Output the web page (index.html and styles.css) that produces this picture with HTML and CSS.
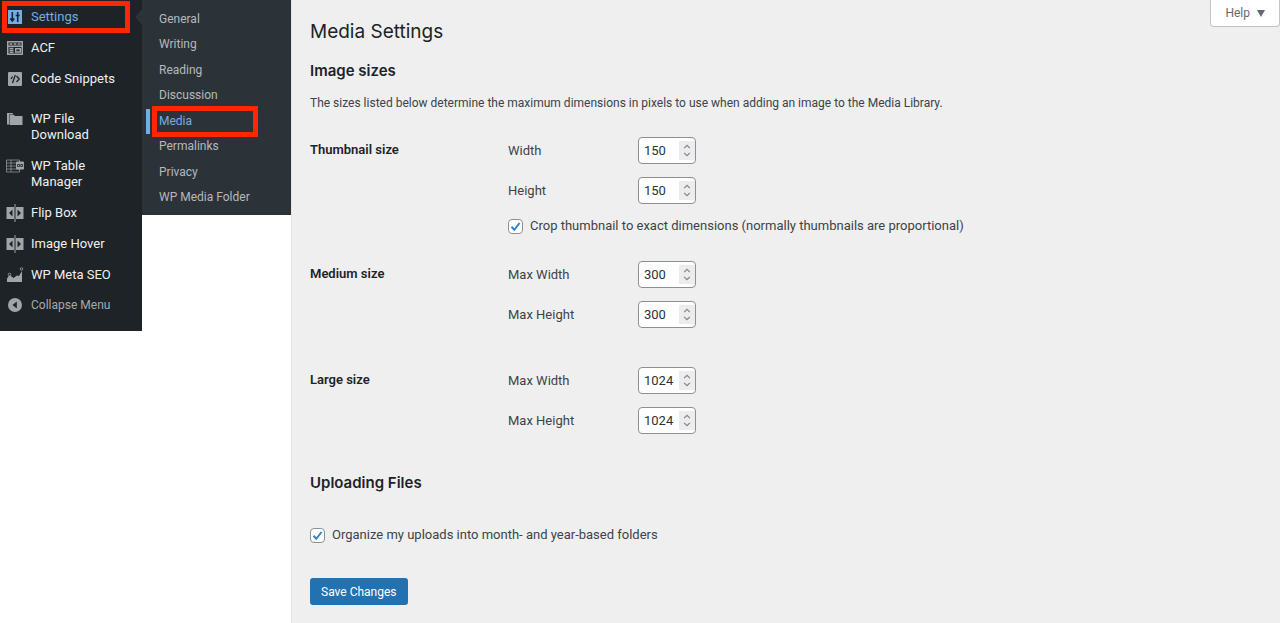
FILE: index.html
```
<!DOCTYPE html>
<html lang="en">
<head>
<meta charset="utf-8">
<title>Media Settings</title>
<link rel="stylesheet" href="styles.css">
</head>
<body>
<svg class="defs" aria-hidden="true">
  <symbol id="flip" viewBox="0 0 18 18"><path fill="currentColor" d="M.5 3H8v12H.5zM10 3h7.500v12H10zM8.500 0h1v18h-1z"/><path fill="#1d2327" d="M6.500 5.500v7L3 9zM11.500 5.500v7L15 9z"/></symbol>
  <symbol id="spin" viewBox="0 0 16 20"><path d="M5 7.500 8 4.500l3 3M5 12.500l3 3 3-3" fill="none" stroke="#85858b" stroke-width="1.300"/></symbol>
  <symbol id="tick" viewBox="0 0 15 15"><path d="M3.500 7.800 6.300 10.800 11.600 4" fill="none" stroke="#3582c4" stroke-width="2"/></symbol>
</svg>
<div class="layout">
  <nav class="admin-menu" aria-label="Main menu">
    <ul class="menu">
      <li><a class="item current" href="#"><svg class="icon" viewBox="0 0 18 18"><path fill="#72aee6" d="M2 2h14v14H2z"/><path d="M6.300 4v9M4.300 10.500l2 2.500 2-2.500M11.700 14V5M9.700 7.500h4M11.700 4v3" fill="none" stroke="#1d2327" stroke-width="1.600"/></svg>Settings</a></li>
      <li><a class="item" href="#"><svg class="icon" viewBox="0 0 18 18"><path fill="currentColor" fill-rule="evenodd" d="M1 2h16v14H1zM2.500 3.500v3h13v-3zM2.500 8v6.500h13V8z"/><path d="M3.500 5h2.800M7.600 5h2.800M11.700 5h2.800M3.500 9.500h4M3.500 11.500h4M3.500 13.300h4" stroke="currentColor" stroke-width="1.300"/><path d="M9.700 9.800h4.600v3.200H9.700z" fill="none" stroke="currentColor" stroke-width="1.400"/></svg>ACF</a></li>
      <li><a class="item" href="#"><svg class="icon" viewBox="0 0 18 18"><rect x="2" y="2" width="14" height="14" rx="1" fill="currentColor"/><path d="M9.300 5 6.500 13M10.500 6 13.200 9l-2.700 3M6.500 6.500 5 9" fill="none" stroke="#1d2327" stroke-width="1.300"/></svg>Code Snippets</a></li>
      <li class="group"><a class="item" href="#"><svg class="icon" viewBox="0 0 18 18"><path fill="currentColor" d="M1 3h5.500l1 1.500H3v10H1zM3.500 5H8l1 1h7.500v9h-13z"/></svg>WP File Download</a></li>
      <li><a class="item" href="#"><svg class="icon" viewBox="0 0 18 18"><path d="M.5 3h13v12H.5zM.5 6h13M.5 9h13M.5 12h13M5 3v12" fill="none" stroke="currentColor" stroke-width=".7"/><rect x="10" y="4.500" width="8" height="8" rx="1" fill="currentColor"/><path d="M11.500 7.500h2v2h-2zM14.700 7.500h2v2h-2z" fill="none" stroke="#1d2327" stroke-width=".8"/></svg>WP Table Manager</a></li>
      <li><a class="item" href="#"><svg class="icon"><use href="#flip"/></svg>Flip Box</a></li>
      <li><a class="item" href="#"><svg class="icon"><use href="#flip"/></svg>Image Hover</a></li>
      <li><a class="item" href="#"><svg class="icon" viewBox="0 0 18 18"><path fill="currentColor" d="M1 16v-3.500L3.500 9 7.500 12 11 9.500l2 .5 3-5v11z"/><circle cx="3.500" cy="8.500" r="1.300" fill="#1d2327" stroke="currentColor" stroke-width=".8"/><circle cx="15.500" cy="3" r="1.300" fill="#1d2327" stroke="currentColor" stroke-width=".8"/></svg>WP Meta SEO</a></li>
    </ul>
    <button class="item collapse" type="button"><svg class="icon" viewBox="0 0 18 18"><circle cx="9" cy="9" r="7" fill="currentColor"/><path fill="#1d2327" d="M10.800 5.500v7L6.500 9z"/></svg>Collapse Menu</button>
    <span class="mark mark-settings"></span>
    <span class="arrow"></span>
  </nav>
  <nav class="submenu" aria-label="Settings">
    <a href="#">General</a>
    <a href="#">Writing</a>
    <a href="#">Reading</a>
    <a href="#">Discussion</a>
    <a class="active" href="#" aria-current="page">Media<span class="mark mark-media"></span></a>
    <a href="#">Permalinks</a>
    <a href="#">Privacy</a>
    <a href="#">WP Media Folder</a>
  </nav>
  <main class="content">
    <button class="help" type="button">Help <svg viewBox="0 0 8 7" width="8" height="7"><path d="M0 0h8L4 7z" fill="#646970"/></svg></button>
    <h1>Media Settings</h1>
    <form>
      <h2>Image sizes</h2>
      <p class="intro">The sizes listed below determine the maximum dimensions in pixels to use when adding an image to the Media Library.</p>
      <section class="size-row">
        <h3>Thumbnail size</h3>
        <div class="fields">
          <label for="tw">Width</label>
          <span class="number"><input id="tw" type="number" value="150"><svg><use href="#spin"/></svg></span>
          <label for="th">Height</label>
          <span class="number"><input id="th" type="number" value="150"><svg><use href="#spin"/></svg></span>
          <label class="check"><span class="box"><input type="checkbox" checked><svg><use href="#tick"/></svg></span>Crop thumbnail to exact dimensions (normally thumbnails are proportional)</label>
        </div>
      </section>
      <section class="size-row medium">
        <h3>Medium size</h3>
        <div class="fields">
          <label for="mw">Max Width</label>
          <span class="number"><input id="mw" type="number" value="300"><svg><use href="#spin"/></svg></span>
          <label for="mh">Max Height</label>
          <span class="number"><input id="mh" type="number" value="300"><svg><use href="#spin"/></svg></span>
        </div>
      </section>
      <section class="size-row large">
        <h3>Large size</h3>
        <div class="fields">
          <label for="lw">Max Width</label>
          <span class="number"><input id="lw" type="number" value="1024"><svg><use href="#spin"/></svg></span>
          <label for="lh">Max Height</label>
          <span class="number"><input id="lh" type="number" value="1024"><svg><use href="#spin"/></svg></span>
        </div>
      </section>
      <h2 class="uploads">Uploading Files</h2>
      <label class="check organize"><span class="box"><input type="checkbox" checked><svg><use href="#tick"/></svg></span>Organize my uploads into month- and year-based folders</label>
      <button class="save" type="submit">Save Changes</button>
    </form>
  </main>
</div>
</body>
</html>
```
FILE: styles.css
```
* { box-sizing: border-box; }
body {
  margin: 0;
  background: #fff;
  color: #3c434a;
  font: 13px/16px Roboto, "Liberation Sans", sans-serif;
}
h1, h2, h3, p, ul { margin: 0; padding: 0; }
button, input { font: inherit; }
a { text-decoration: none; }
.defs { position: absolute; width: 0; height: 0; }
.layout {
  display: grid;
  grid-template-columns: 142px 149px 1fr;
  align-items: start;
  min-height: 100vh;
}

.admin-menu {
  position: relative;
  padding: 1px 0 11px;
  background: #1d2327;
}
.menu { list-style: none; }
.group { margin-top: 9px; }
.item {
  display: flex;
  gap: 7px;
  padding: 8px 16px 7px 6px;
  color: #f0f0f1;
}
.icon {
  flex: none;
  width: 18px;
  height: 18px;
  margin: -1px 0;
  color: #a0a5aa;
}
.current { color: #72aee6; }
.collapse {
  width: 100%;
  padding-top: 7px;
  padding-right: 0;
  border: 0;
  background: none;
  color: #a7aaad;
  font-size: 12px;
  text-align: left;
}
.arrow {
  position: absolute;
  top: 9px;
  right: 0;
  border: 8px solid transparent;
  border-left: 0;
  border-right: 7px solid #2c3338;
}
.mark {
  position: absolute;
  border: 5px solid #ff2600;
}
.mark-settings { inset: 1px 12px auto 2px; height: 32px; }

.submenu {
  display: flex;
  flex-direction: column;
  justify-content: space-between;
  min-height: 215px;
  padding: 7px 0 5px;
  background: #2c3338;
}
.submenu a {
  position: relative;
  padding: 4px 0 5px 17px;
  color: #b4b9be;
  font-size: 12px;
}
.submenu .active { color: #72aee6; }
.submenu .active::before {
  content: "";
  position: absolute;
  inset: 0 auto 0 4px;
  width: 4px;
  background: #72aee6;
}
.mark-media { inset: -3px 33px -3px 10px; }

.content {
  position: relative;
  align-self: stretch;
  padding: 19px 18px 18px;
  border-left: 1px solid #e4e4e5;
  background: #efefef;
}
.help {
  position: absolute;
  top: 0;
  right: 0;
  display: flex;
  align-items: center;
  gap: 7px;
  padding: 5px 14px;
  border: 1px solid #c3c4c7;
  border-top: 0;
  border-radius: 0 0 4px 4px;
  background: #fff;
  color: #646970;
  font-size: 12px;
}
h1, h2 { font-family: Inter, "Liberation Sans", sans-serif; }
h1, h2, h3 { color: #1d2327; }
h1 {
  font-size: 19px;
  font-weight: 400;
  line-height: 26px;
}
h2, h3 { font-weight: 600; }
h2 { margin-top: 16px; font-size: 15px; line-height: 20px; }
h3 { padding-top: 5px; font-size: 13px; }
.intro { margin-top: 14px; font-size: 12px; }
.size-row {
  display: grid;
  grid-template-columns: 198px 1fr;
  margin-top: 26px;
}
.medium { margin-top: 27px; }
.large { margin-top: 39px; }
.fields {
  display: grid;
  grid-template-columns: 130px 58px 1fr;
  align-items: center;
  row-gap: 13px;
}
.fields > label { grid-column: 1; }
.number { position: relative; display: flex; }
.number input {
  width: 100%;
  height: 27px;
  padding: 0 5px;
  border: 1px solid #8c8f94;
  border-radius: 4px;
  background: #fff;
  color: #2c3338;
  appearance: textfield;
}
.number input::-webkit-inner-spin-button { display: none; }
.number svg {
  position: absolute;
  top: 4px;
  right: 1px;
  width: 16px;
  height: 19px;
  background: #ececee;
  pointer-events: none;
}
.check {
  display: flex;
  align-items: center;
  gap: 7px;
}
.fields > .check { grid-column: 1 / -1; padding-top: 1px; }
.box { position: relative; display: flex; }
.box input {
  width: 15px;
  height: 15px;
  margin: 0;
  border: 1px solid #8c8f94;
  border-radius: 4px;
  background: #fff;
  appearance: none;
}
.box svg {
  position: absolute;
  inset: 0;
  width: 15px;
  height: 15px;
  pointer-events: none;
}
.uploads { margin-top: 39px; }
.organize { margin-top: 34px; }
.save {
  margin-top: 35px;
  padding: 6px 11px 5px;
  border: 0;
  border-radius: 3px;
  background: #2271b1;
  color: #fff;
  font-size: 12px;
}
```
